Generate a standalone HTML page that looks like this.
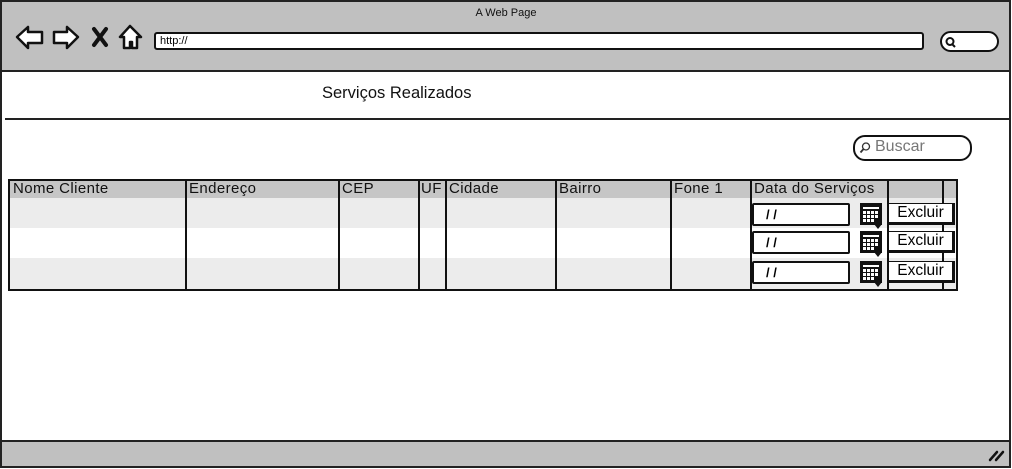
<!DOCTYPE html>
<html><head><meta charset="utf-8"><style>
*{margin:0;padding:0;box-sizing:border-box}
body{width:1012px;height:469px;background:#fff;font-family:"Liberation Sans",sans-serif;position:relative;overflow:hidden}
.a{position:absolute}
.t{font-size:15px;letter-spacing:0.4px;color:#111}
</style></head><body>
<div class="a" style="left:0;top:0;width:1011px;height:468px;border:2px solid #222;"></div>
<div class="a" style="left:2px;top:2px;width:1007px;height:70px;background:#c0c0c0;border-bottom:2px solid #222"></div>
<div class="a" style="left:0;top:7px;width:1012px;text-align:center;font-size:11px;color:#111">A Web Page</div>
<svg class="a" style="left:14px;top:22px" width="135" height="30" viewBox="0 0 135 30">
 <path d="M3 15 L14 5 L14 10 L28 10 L28 21 L14 21 L14 26 Z" fill="#fff" stroke="#111" stroke-width="2.5" stroke-linejoin="round"/>
 <path d="M64 15 L53 5 L53 10 L40 10 L40 21 L53 21 L53 26 Z" fill="#fff" stroke="#111" stroke-width="2.5" stroke-linejoin="round"/>
 <path d="M80 7 L92 23 M92 7 L80 23" stroke="#111" stroke-width="4" stroke-linecap="round"/>
 <path d="M116 4 L106 15 L110 15 L110 26 L116 26 L116 20 L118 20 L118 26 L123 26 L123 15 L127 15 Z" fill="#fff" stroke="#111" stroke-width="2.5" stroke-linejoin="round"/>
</svg>
<div class="a" style="left:154px;top:32px;width:770px;height:18px;background:#fff;border:2px solid #111;border-radius:3px;font-size:11px;padding-left:4px;line-height:14px">http://</div>
<div class="a" style="left:940px;top:31px;width:59px;height:21px;background:#fff;border:2px solid #111;border-radius:11px"></div>
<svg class="a" style="left:944px;top:36px" width="14" height="12"><circle cx="6" cy="5.5" r="3.5" fill="none" stroke="#111" stroke-width="2"/><path d="M8 8 L11 11" stroke="#111" stroke-width="2"/></svg>
<div class="a" style="left:322px;top:84px;font-size:16.5px;color:#111">Serviços Realizados</div>
<div class="a" style="left:5px;top:118px;width:1004px;height:2px;background:#222"></div>
<div class="a" style="left:853px;top:135px;width:119px;height:26px;border:2px solid #111;border-radius:12px;background:#fff"></div>
<svg class="a" style="left:859px;top:141px" width="14" height="14"><circle cx="7" cy="5.5" r="3.5" fill="none" stroke="#333" stroke-width="1.3"/><path d="M4.5 8 L1.5 11.5" stroke="#333" stroke-width="1.8"/></svg>
<div class="a" style="left:875px;top:138px;font-size:16px;color:#777">Buscar</div>
<div class="a" style="left:2px;top:440px;width:1007px;height:26px;background:#c0c0c0;border-top:2px solid #222"></div>
<svg class="a" style="left:988px;top:448px" width="18" height="14"><path d="M2 12 L9 4 M8 12 L15 4" stroke="#111" stroke-width="2.5" stroke-linecap="round"/></svg>
<div class="a" style="left:8px;top:179px;width:950px;height:112px;border:2px solid #111;background:#fff"></div>
<div class="a" style="left:10px;top:181px;width:946px;height:17px;background:#c6c6c6"></div>
<div class="a" style="left:10px;top:198px;width:946px;height:30px;background:#ececec"></div>
<div class="a" style="left:10px;top:258px;width:946px;height:31px;background:#ececec"></div>
<div class="a" style="left:185px;top:180px;width:2px;height:110px;background:#111"></div>
<div class="a" style="left:338px;top:180px;width:2px;height:110px;background:#111"></div>
<div class="a" style="left:418px;top:180px;width:2px;height:110px;background:#111"></div>
<div class="a" style="left:445px;top:180px;width:2px;height:110px;background:#111"></div>
<div class="a" style="left:555px;top:180px;width:2px;height:110px;background:#111"></div>
<div class="a" style="left:670px;top:180px;width:2px;height:110px;background:#111"></div>
<div class="a" style="left:750px;top:180px;width:2px;height:110px;background:#111"></div>
<div class="a" style="left:887px;top:180px;width:2px;height:110px;background:#111"></div>
<div class="a" style="left:942px;top:180px;width:2px;height:110px;background:#111"></div>
<div class="a t" style="left:13px;top:180px">Nome Cliente</div>
<div class="a t" style="left:189px;top:180px">Endereço</div>
<div class="a t" style="left:342px;top:180px">CEP</div>
<div class="a t" style="left:421px;top:180px">UF</div>
<div class="a t" style="left:449px;top:180px">Cidade</div>
<div class="a t" style="left:559px;top:180px">Bairro</div>
<div class="a t" style="left:674px;top:180px">Fone 1</div>
<div class="a t" style="left:754px;top:180px">Data do Serviços</div>
<div class="a" style="left:752px;top:203px;width:98px;height:23px;background:#fff;border:2px solid #111;border-radius:2px;font-size:13px;font-weight:bold;padding-left:12px;line-height:19px">/ /</div>
<div class="a" style="left:752px;top:231px;width:98px;height:23px;background:#fff;border:2px solid #111;border-radius:2px;font-size:13px;font-weight:bold;padding-left:12px;line-height:19px">/ /</div>
<div class="a" style="left:752px;top:261px;width:98px;height:23px;background:#fff;border:2px solid #111;border-radius:2px;font-size:13px;font-weight:bold;padding-left:12px;line-height:19px">/ /</div>
<svg class="a" style="left:860px;top:203px" width="24" height="84" viewBox="0 0 24 84">
 <defs><g id="cal"><rect x="0" y="0" width="22" height="22" fill="#111"/><rect x="3" y="4" width="16" height="2" fill="#fff"/>
 <g fill="#fff"><rect x="3" y="8" width="3" height="3"/><rect x="7" y="8" width="3" height="3"/><rect x="11" y="8" width="3" height="3"/><rect x="15" y="8" width="3" height="3"/>
 <rect x="3" y="12" width="3" height="3"/><rect x="7" y="12" width="3" height="3"/><rect x="11" y="12" width="3" height="3"/><rect x="15" y="12" width="3" height="3"/>
 <rect x="3" y="16" width="3" height="3"/><rect x="7" y="16" width="3" height="3"/><rect x="11" y="16" width="3" height="3"/></g>
 <path d="M14 21 L22 21 L18 26 Z" fill="#111"/></g></defs>
 <use href="#cal" x="0" y="0"/><use href="#cal" x="0" y="28"/><use href="#cal" x="0" y="58"/>
</svg>
<div class="a" style="left:888px;top:203px;width:67px;height:22px;background:#fff;border:1px solid #111;border-right:3px solid #111;border-bottom:3px solid #111;font-size:15.5px;text-align:center;line-height:18px">Excluir</div>
<div class="a" style="left:888px;top:231px;width:67px;height:22px;background:#fff;border:1px solid #111;border-right:3px solid #111;border-bottom:3px solid #111;font-size:15.5px;text-align:center;line-height:18px">Excluir</div>
<div class="a" style="left:888px;top:261px;width:67px;height:22px;background:#fff;border:1px solid #111;border-right:3px solid #111;border-bottom:3px solid #111;font-size:15.5px;text-align:center;line-height:18px">Excluir</div>
</body></html>
